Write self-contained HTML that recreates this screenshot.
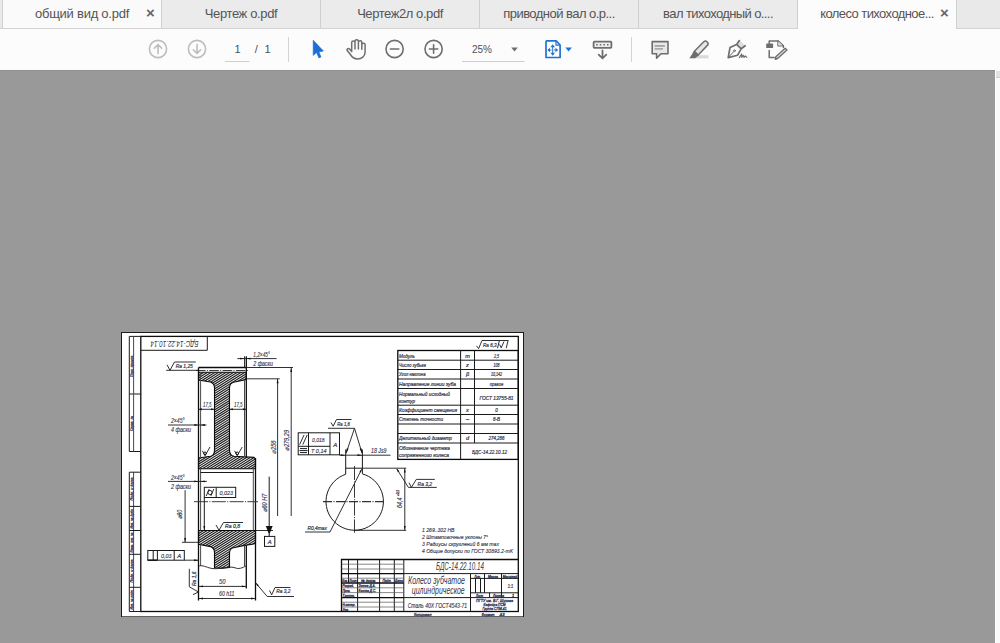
<!DOCTYPE html>
<html><head><meta charset="utf-8">
<style>
html,body{margin:0;padding:0;}
body{width:1000px;height:643px;overflow:hidden;background:#999;font-family:"Liberation Sans",sans-serif;position:relative;}
#tabs{position:absolute;left:0;top:0;width:1000px;height:29px;background:#e9e9e9;}
#tabs .line{position:absolute;left:0;top:28px;width:1000px;height:1px;background:#d2d2d2;}
.tab{position:absolute;top:0;height:28px;box-sizing:border-box;border-left:1px solid #d0d0d0;background:#ebebeb;color:#545454;font-size:13px;line-height:28px;text-align:center;white-space:nowrap;}
.tab.hi{background:#fafafa;}
.tab.act{background:#fcfcfc;height:29px;}
.tab .x{position:absolute;top:-1px;font-size:15px;font-weight:bold;color:#666;}
#tb{position:absolute;left:0;top:29px;width:1000px;height:41px;background:#fcfcfc;}
#tbline{position:absolute;left:0;top:70px;width:995px;height:1px;background:#8e8e8e;}
#sb{position:absolute;left:995px;top:70px;width:5px;height:573px;background:#f9f9f9;border-left:1px solid #fff;box-sizing:border-box;}
#sbb{position:absolute;left:996px;top:71px;width:4px;height:6px;background:#e2e2e2;border-bottom:1px solid #cfcfcf;}
#page{position:absolute;left:121px;top:332px;width:403px;height:285px;background:#fff;}
svg{position:absolute;left:0;top:0;}
</style></head>
<body>
<div id="tabs">
<div class="tab hi" style="left:2px;width:159px;"><span style="letter-spacing:-0.25px">общий вид о.pdf</span><span class="x" style="left:143px;">×</span></div>
<div class="tab" style="left:161px;width:159px;"><span style="letter-spacing:-0.37px">Чертеж о.pdf</span></div>
<div class="tab" style="left:320px;width:159px;"><span style="letter-spacing:-0.43px">Чертеж2л о.pdf</span></div>
<div class="tab" style="left:479px;width:159px;"><span style="letter-spacing:-0.53px">приводной вал о.р...</span></div>
<div class="tab" style="left:638px;width:159px;"><span style="letter-spacing:-0.6px">вал тихоходный о....</span></div>
<div class="tab act" style="left:797px;width:160px;border-right:1px solid #d0d0d0;"><span style="letter-spacing:-0.58px">колесо тихоходное...</span><span class="x" style="left:142px;">×</span></div>
<div class="line" style="width:797px;"></div>
<div class="line" style="left:957px;width:43px;"></div>
</div>
<div id="tb"></div>
<div id="tbline"></div>
<div id="sb"></div><div id="sbb"></div>
<div id="page"></div>
<!--TBS--><svg id="tbs" width="1000" height="41" viewBox="0 29 1000 41" style="top:29px">
<g fill="none" stroke="#bdbdbd" stroke-width="1.6" stroke-linecap="round" stroke-linejoin="round">
<circle cx="158" cy="49" r="8.6"/><path d="M158 53.5V44.6M154.3 48.2L158 44.5L161.7 48.2"/>
<circle cx="197" cy="49" r="8.6"/><path d="M197 44.5V53.4M193.3 49.8L197 53.5L200.7 49.8"/>
</g>
<g font-family="Liberation Sans, sans-serif" font-size="11" fill="#505050">
<text x="234.6" y="53">1</text><text x="254.8" y="53">/</text><text x="264.6" y="53">1</text>
<text x="472" y="53" textLength="20" lengthAdjust="spacingAndGlyphs">25%</text>
</g>
<rect x="225" y="61" width="24.5" height="1" fill="#cfcfcf"/>
<rect x="462" y="61" width="62.5" height="1" fill="#cfcfcf"/>
<rect x="288" y="37" width="1" height="25" fill="#d4d4d4"/>
<rect x="631" y="37" width="1" height="25" fill="#d4d4d4"/>
<path d="M313.2 40.2V55.4L316.5 52.6L318.9 57.9L321 57L318.9 51.9L323.4 51Z" fill="#1b6fd2" stroke="#1b6fd2" stroke-width="0.6" stroke-linejoin="round"/>
<g fill="none" stroke="#6e6e6e" stroke-width="1.5" stroke-linecap="round" stroke-linejoin="round">
<path d="M351.7 51.6V42.6a1.65 1.65 0 0 1 3.3 0V49M355 42V41.4a1.7 1.7 0 0 1 3.4 0V49M358.4 42.4a1.7 1.7 0 0 1 3.4 0V49.3M361.8 44.8a1.65 1.65 0 0 1 3.3 0V52C365.1 56.5 361.5 59 357.6 59C353.6 59 351.6 56.6 350 54L347.2 50.6C346.3 49.2 348.2 47.8 349.5 49L351.7 51.6"/>
</g>
<g fill="none" stroke="#6e6e6e" stroke-width="1.6" stroke-linecap="round">
<circle cx="394.6" cy="49" r="8.6"/><path d="M390.4 49H398.8"/>
<circle cx="433.6" cy="49" r="8.6"/><path d="M429.4 49H437.8M433.6 44.8V53.2"/>
</g>
<path d="M511.2 47.6H517.8L514.5 51.4Z" fill="#6e6e6e"/>
<g fill="none" stroke="#1f72d4" stroke-width="1.7" stroke-linejoin="round">
<path d="M546.6 40.9H556.2L560.1 45V57.5H546V41.5Z"/>
<path d="M556 41.2V45.2H560" stroke-width="1.2"/>
</g>
<g fill="#1f72d4"><path d="M552.7 44.3L555 47.2H550.4ZM552.7 55.7L555 52.8H550.4ZM547.3 50L550 47.8V52.2ZM558.2 50L555.5 47.8V52.2Z"/><rect x="552.2" y="46.5" width="1" height="7"/><rect x="549.5" y="49.5" width="2" height="1"/><rect x="554" y="49.5" width="2" height="1"/>
<path d="M565.3 47.6H571.9L568.6 51.6Z"/></g>
<g fill="none" stroke="#6e6e6e" stroke-width="1.6" stroke-linecap="round" stroke-linejoin="round">
<rect x="593.6" y="41.6" width="17.8" height="6.2" rx="0.8" fill="#ececec" stroke-width="1.8"/>
<path d="M602.5 50.4V58M598.7 54.6L602.5 58.3L606.3 54.6" stroke-width="1.8"/>
</g>
<g fill="#6e6e6e"><rect x="596.2" y="44" width="1.5" height="1.5"/><rect x="599.8" y="44" width="1.5" height="1.5"/><rect x="603.4" y="44" width="1.5" height="1.5"/><rect x="607" y="44" width="1.5" height="1.5"/></g>
<path d="M652.2 41.6H668V53.7H661L656.6 58.2V53.7H652.2Z" fill="#e8e8e8" stroke="#6e6e6e" stroke-width="1.6" stroke-linejoin="round"/>
<rect x="654.6" y="45.4" width="10.2" height="1.1" fill="#777"/><rect x="654.6" y="48" width="8.4" height="1.7" fill="#a9a9a9"/>
<rect x="694" y="55.2" width="14.5" height="3.2" fill="#d9d9d9"/>
<path d="M694.4 51.2L703.8 41.8a2.2 2.2 0 0 1 3.1 0l.5 .5a2.2 2.2 0 0 1 0 3.1L698.2 55Z" fill="#e6e6e6" stroke="#6e6e6e" stroke-width="1.5" stroke-linejoin="round"/>
<path d="M693.9 50.7L698.8 55.5L696.4 57.2L695 58.3H689.4L692 54.2Z" fill="#6e6e6e"/>
<path d="M736.8 44.4L739.5 40.6L745.3 45.6L741.2 48.8Z" fill="#dcdcdc"/>
<g fill="none" stroke="#6e6e6e" stroke-width="1.7" stroke-linecap="round" stroke-linejoin="round">
<path d="M728.2 57.6L730 47.6L736.6 44.4L741.2 48.8L737.6 55.2ZM736.6 44.4L739.4 40.6M741.2 48.8L745.2 45.8" />
<path d="M728.6 57.3L734 51.2" stroke-width="1"/><circle cx="734.5" cy="50.7" r="0.9" stroke-width="0.9"/>
<path d="M739.4 57.6L741.6 54L741.8 57.4L743.2 55.2L744 57.4L745.2 56L746.8 57.4" stroke-width="1.2"/>
</g>
<g fill="none" stroke="#6e6e6e" stroke-width="1.5" stroke-linejoin="round" stroke-linecap="round">
<path d="M769.2 43.4V40.9H778L783.4 45.8V47.4"/><path d="M769.2 50.4V57.6H774.2"/>
<path d="M778 41V45.8H783.2" stroke-width="1.4"/>
</g>
<path d="M778.4 41.6L782.6 45.4H778.4Z" fill="#e4e4e4"/>
<rect x="766.2" y="43.5" width="6.9" height="4.6" rx="0.6" fill="#6e6e6e"/>
<path d="M785.2 48.2L787 49.9L777.6 58.6L775.2 59.4L775.8 56.8Z" fill="#ddd" stroke="#6e6e6e" stroke-width="1.3" stroke-linejoin="round"/>
<path d="M775.3 59.3L775.9 56.9L777.5 58.5Z" fill="#6e6e6e"/>
</svg>
<!--TBE-->
<!--DWS--><svg id="dw" width="1000" height="643" font-family="Liberation Sans, sans-serif" font-style="italic">
<defs><pattern id="h" width="1.435" height="8" patternUnits="userSpaceOnUse" patternTransform="rotate(45)"><rect width="1.435" height="8" fill="#fff"/><rect x="0.4" y="0" width="0.6" height="8" fill="#151515"/></pattern></defs>
<rect x="121.5" y="332.5" width="402" height="284" fill="#fff" stroke="#1c1c1c" stroke-width="1"/>
<path d="M122 616.5H523" stroke="#606060" stroke-width="1" fill="none"/>
<rect x="140.8" y="336.4" width="377.5" height="275.1" stroke="#0c0c0c" stroke-width="1.3" fill="none"/>
<path d="M140.8 336.4H129.3V451.5H140.8M129.3 394H140.8" stroke="#1a1a1a" stroke-width="1" fill="none"/>
<path d="M133.6 336.4L133.6 451.5" stroke="#4a4a4a" stroke-width="1" fill="none"/>
<path d="M133.6 472.2L133.6 611.5" stroke="#4a4a4a" stroke-width="1" fill="none"/>
<path d="M140.8 472.2H129.3V611.5H140.8M129.3 506.4H140.8M129.3 530.5H140.8M129.3 554.3H140.8M129.3 587.3H140.8" stroke="#1a1a1a" stroke-width="1" fill="none"/>
<text x="132.6" y="377.0" font-size="3.2" text-anchor="start" fill="#3a4068" stroke="#3a4068" stroke-width="0.30" textLength="22" lengthAdjust="spacingAndGlyphs" transform="rotate(-90 132.6 377.0)">Перв. примен.</text>
<text x="132.6" y="431.0" font-size="3.2" text-anchor="start" fill="#3a4068" stroke="#3a4068" stroke-width="0.30" textLength="15" lengthAdjust="spacingAndGlyphs" transform="rotate(-90 132.6 431.0)">Справ. №</text>
<text x="132.6" y="500.5" font-size="3.2" text-anchor="start" fill="#3a4068" stroke="#3a4068" stroke-width="0.30" textLength="23" lengthAdjust="spacingAndGlyphs" transform="rotate(-90 132.6 500.5)">Подп. и дата</text>
<text x="132.6" y="528.5" font-size="3.2" text-anchor="start" fill="#3a4068" stroke="#3a4068" stroke-width="0.30" textLength="20" lengthAdjust="spacingAndGlyphs" transform="rotate(-90 132.6 528.5)">Инв. № дубл.</text>
<text x="132.6" y="552.5" font-size="3.2" text-anchor="start" fill="#3a4068" stroke="#3a4068" stroke-width="0.30" textLength="20" lengthAdjust="spacingAndGlyphs" transform="rotate(-90 132.6 552.5)">Взам. инв. №</text>
<text x="132.6" y="582.5" font-size="3.2" text-anchor="start" fill="#3a4068" stroke="#3a4068" stroke-width="0.30" textLength="23" lengthAdjust="spacingAndGlyphs" transform="rotate(-90 132.6 582.5)">Подп. и дата</text>
<text x="132.6" y="609.5" font-size="3.2" text-anchor="start" fill="#3a4068" stroke="#3a4068" stroke-width="0.30" textLength="20" lengthAdjust="spacingAndGlyphs" transform="rotate(-90 132.6 609.5)">Инв. № подл.</text>
<path d="M207.3 336.4V350.3H140.8" stroke="#1a1a1a" stroke-width="1" fill="none"/>
<text x="174.5" y="343.8" font-size="8.6" text-anchor="middle" fill="#33374c" stroke="#33374c" stroke-width="0.00" textLength="48" lengthAdjust="spacingAndGlyphs" transform="rotate(180 174.5 343.8)" dominant-baseline="central">БДС-14.22.10.14</text>
<clipPath id="c1"><path d="M198.5 372.2H246.3V379.5L233.5 382.3C231 383 229.5 385 229.5 388V450C229.5 453.5 231 455.8 234 456.3L254 457.4L255.5 459V468.7H198.5V458L210.5 456.3C213 455.8 214.5 453.5 214.5 450V388C214.5 385 213 383 210.5 382L198.5 380Z"/></clipPath>
<path d="M196 370.19L258 331.44M196 372.52L258 333.77M196 374.85L258 336.10M196 377.18L258 338.43M196 379.51L258 340.76M196 381.84L258 343.09M196 384.18L258 345.43M196 386.51L258 347.76M196 388.84L258 350.09M196 391.17L258 352.42M196 393.50L258 354.75M196 395.83L258 357.08M196 398.16L258 359.41M196 400.49L258 361.74M196 402.83L258 364.08M196 405.16L258 366.41M196 407.49L258 368.74M196 409.82L258 371.07M196 412.15L258 373.40M196 414.48L258 375.73M196 416.81L258 378.06M196 419.14L258 380.39M196 421.48L258 382.73M196 423.81L258 385.06M196 426.14L258 387.39M196 428.47L258 389.72M196 430.80L258 392.05M196 433.13L258 394.38M196 435.46L258 396.71M196 437.79L258 399.04M196 440.13L258 401.38M196 442.46L258 403.71M196 444.79L258 406.04M196 447.12L258 408.37M196 449.45L258 410.70M196 451.78L258 413.03M196 454.11L258 415.36M196 456.44L258 417.69M196 458.78L258 420.03M196 461.11L258 422.36M196 463.44L258 424.69M196 465.77L258 427.02M196 468.10L258 429.35M196 470.43L258 431.68M196 472.76L258 434.01M196 475.09L258 436.34M196 477.43L258 438.68M196 479.76L258 441.01M196 482.09L258 443.34M196 484.42L258 445.67M196 486.75L258 448.00M196 489.08L258 450.33M196 491.41L258 452.66M196 493.74L258 454.99M196 496.08L258 457.33M196 498.41L258 459.66M196 500.74L258 461.99M196 503.07L258 464.32M196 505.40L258 466.65M196 507.73L258 468.98" clip-path="url(#c1)" stroke="#222" stroke-width="1.2" fill="none"/>
<path d="M198.5 372.2H246.3V379.5L233.5 382.3C231 383 229.5 385 229.5 388V450C229.5 453.5 231 455.8 234 456.3L254 457.4L255.5 459V468.7H198.5V458L210.5 456.3C213 455.8 214.5 453.5 214.5 450V388C214.5 385 213 383 210.5 382L198.5 380Z" fill="none" stroke="#0c0c0c" stroke-width="1.1"/>
<clipPath id="c2"><path d="M198.5 530.5H255.5V542L253.8 544L244.5 545.4L233.5 547.8C231 548.4 229.5 550 229.5 553V567.5L222 568.2L214.5 567.8V553C214.5 550 213 547.6 210.5 546.6L198.5 544.3Z"/></clipPath>
<path d="M196 528.19L258 489.44M196 530.52L258 491.77M196 532.85L258 494.10M196 535.18L258 496.43M196 537.51L258 498.76M196 539.84L258 501.09M196 542.18L258 503.43M196 544.51L258 505.76M196 546.84L258 508.09M196 549.17L258 510.42M196 551.50L258 512.75M196 553.83L258 515.08M196 556.16L258 517.41M196 558.49L258 519.74M196 560.83L258 522.08M196 563.16L258 524.41M196 565.49L258 526.74M196 567.82L258 529.07M196 570.15L258 531.40M196 572.48L258 533.73M196 574.81L258 536.06M196 577.14L258 538.39M196 579.48L258 540.73M196 581.81L258 543.06M196 584.14L258 545.39M196 586.47L258 547.72M196 588.80L258 550.05M196 591.13L258 552.38M196 593.46L258 554.71M196 595.79L258 557.04M196 598.13L258 559.38M196 600.46L258 561.71M196 602.79L258 564.04M196 605.12L258 566.37M196 607.45L258 568.70" clip-path="url(#c2)" stroke="#222" stroke-width="1.2" fill="none"/>
<path d="M198.5 530.5H255.5V542L253.8 544L244.5 545.4L233.5 547.8C231 548.4 229.5 550 229.5 553V567.5L222 568.2L214.5 567.8V553C214.5 550 213 547.6 210.5 546.6L198.5 544.3Z" fill="none" stroke="#0c0c0c" stroke-width="1.1"/>
<path d="M198.5 367.5L246.3 367.5" stroke="#0c0c0c" stroke-width="1.3" fill="none"/>
<path d="M196 370.45H248" stroke="#3a3a3a" stroke-width="1.1" stroke-dasharray="9.5 1.4 1 1.4" fill="none"/>
<path d="M198.5 367.5L198.5 600.5" stroke="#0c0c0c" stroke-width="1.3" fill="none"/>
<path d="M200.6 372.2L200.6 458" stroke="#4a4a4a" stroke-width="1" fill="none"/>
<path d="M246.3 356.3L246.3 458" stroke="#0c0c0c" stroke-width="1.3" fill="none"/>
<path d="M244.5 356.3L244.5 367.5" stroke="#1e1e1e" stroke-width="0.92" fill="none"/>
<path d="M244.5 380L244.5 457" stroke="#4a4a4a" stroke-width="1" fill="none"/>
<path d="M255.5 458L255.5 600.5" stroke="#0c0c0c" stroke-width="1.3" fill="none"/>
<path d="M200.6 468.7L200.6 530.5" stroke="#4a4a4a" stroke-width="1" fill="none"/>
<path d="M253.3 468.7L253.3 530.5" stroke="#4a4a4a" stroke-width="1" fill="none"/>
<path d="M200.6 472.5L253.3 472.5" stroke="#1a1a1a" stroke-width="1" fill="none"/>
<path d="M200.6 544.5L200.6 566" stroke="#4a4a4a" stroke-width="1" fill="none"/>
<path d="M244.5 545.5L244.5 566" stroke="#4a4a4a" stroke-width="1" fill="none"/>
<path d="M246.3 545.2L246.3 588.5" stroke="#0c0c0c" stroke-width="1.3" fill="none"/>
<path d="M198.5 566.3C201 564.8 205 566.5 209 567.8S217 568.8 222 568.2S231 566.2 235 567.8S242 568 246.3 565.8" stroke="#1e1e1e" stroke-width="0.92" fill="none"/>
<path d="M194 501.7H258" stroke="#333" stroke-width="0.95" stroke-dasharray="14 1.4 1 1.4" fill="none"/>
<path d="M237.4 358.6L276.6 358.6" stroke="#1e1e1e" stroke-width="0.92" fill="none"/>
<path d="M244.40 358.60L240.20 357.65L240.20 359.55Z" fill="#111"/>
<path d="M246.30 358.60L250.50 359.55L250.50 357.65Z" fill="#111"/>
<text x="253.3" y="356.8" font-size="6.6" text-anchor="start" fill="#33374c" stroke="#33374c" stroke-width="0.14" textLength="16.5" lengthAdjust="spacingAndGlyphs">1,2×45°</text>
<text x="253.3" y="365.6" font-size="6.3" text-anchor="start" fill="#33374c" stroke="#33374c" stroke-width="0.14" textLength="19.5" lengthAdjust="spacingAndGlyphs">2 фаски</text>
<path d="M246.3 367.5L293 367.5" stroke="#1e1e1e" stroke-width="0.92" fill="none"/>
<path d="M291.2 367.5L291.2 516" stroke="#1e1e1e" stroke-width="0.92" fill="none"/>
<path d="M291.20 367.80L290.25 372.00L292.15 372.00Z" fill="#111"/>
<path d="M246.3 378.8L279.7 378.8" stroke="#1e1e1e" stroke-width="0.92" fill="none"/>
<path d="M277.6 378.8L277.6 516" stroke="#1e1e1e" stroke-width="0.92" fill="none"/>
<path d="M277.60 379.00L276.65 383.20L278.55 383.20Z" fill="#111"/>
<text x="275.6" y="453.5" font-size="6.6" text-anchor="start" fill="#33374c" stroke="#33374c" stroke-width="0.14" textLength="13" lengthAdjust="spacingAndGlyphs" transform="rotate(-90 275.6 453.5)">⌀256</text>
<text x="288.6" y="450.5" font-size="6.6" text-anchor="start" fill="#33374c" stroke="#33374c" stroke-width="0.14" textLength="20.5" lengthAdjust="spacingAndGlyphs" transform="rotate(-90 288.6 450.5)">⌀279,29</text>
<path d="M198.5 409.3L214.5 409.3" stroke="#1e1e1e" stroke-width="0.92" fill="none"/>
<path d="M229.5 409.3L246.3 409.3" stroke="#1e1e1e" stroke-width="0.92" fill="none"/>
<path d="M198.70 409.30L201.90 410.25L201.90 408.35Z" fill="#111"/>
<path d="M214.30 409.30L211.10 408.35L211.10 410.25Z" fill="#111"/>
<path d="M229.70 409.30L232.90 410.25L232.90 408.35Z" fill="#111"/>
<path d="M246.10 409.30L242.90 408.35L242.90 410.25Z" fill="#111"/>
<text x="203" y="407" font-size="6.6" text-anchor="start" fill="#33374c" stroke="#33374c" stroke-width="0.14" textLength="8.5" lengthAdjust="spacingAndGlyphs">17,5</text>
<text x="234" y="407" font-size="6.6" text-anchor="start" fill="#33374c" stroke="#33374c" stroke-width="0.14" textLength="8.5" lengthAdjust="spacingAndGlyphs">17,5</text>
<path d="M168 425L206.5 425" stroke="#1e1e1e" stroke-width="0.92" fill="none"/>
<path d="M198.50 425.00L194.30 424.05L194.30 425.95Z" fill="#111"/>
<path d="M200.60 425.00L204.80 425.95L204.80 424.05Z" fill="#111"/>
<text x="171" y="423" font-size="6.6" text-anchor="start" fill="#33374c" stroke="#33374c" stroke-width="0.14" textLength="13.5" lengthAdjust="spacingAndGlyphs">2×45°</text>
<text x="171" y="432.3" font-size="6.3" text-anchor="start" fill="#33374c" stroke="#33374c" stroke-width="0.14" textLength="20" lengthAdjust="spacingAndGlyphs">4 фаски</text>
<path d="M168 481.4L206.9 481.4" stroke="#1e1e1e" stroke-width="0.92" fill="none"/>
<path d="M198.50 481.40L194.30 480.45L194.30 482.35Z" fill="#111"/>
<path d="M200.60 481.40L204.80 482.35L204.80 480.45Z" fill="#111"/>
<text x="171" y="479.5" font-size="6.6" text-anchor="start" fill="#33374c" stroke="#33374c" stroke-width="0.14" textLength="13.5" lengthAdjust="spacingAndGlyphs">2×45°</text>
<text x="171" y="488.7" font-size="6.3" text-anchor="start" fill="#33374c" stroke="#33374c" stroke-width="0.14" textLength="20" lengthAdjust="spacingAndGlyphs">2 фаски</text>
<path d="M185.1 490.2L185.1 542.3" stroke="#1e1e1e" stroke-width="0.92" fill="none"/>
<path d="M182 542.3L198.5 542.3" stroke="#1e1e1e" stroke-width="0.92" fill="none"/>
<path d="M185.10 542.20L186.05 538.00L184.15 538.00Z" fill="#111"/>
<text x="182.2" y="519.2" font-size="6.6" text-anchor="start" fill="#33374c" stroke="#33374c" stroke-width="0.14" textLength="9.5" lengthAdjust="spacingAndGlyphs" transform="rotate(-90 182.2 519.2)">⌀80</text>
<path d="M202.4 450.8L205 455.8L210 447" stroke="#1e1e1e" stroke-width="0.92" fill="none"/>
<circle cx="205" cy="453.3" r="1.3" stroke="#111" stroke-width="1" fill="none"/>
<path d="M234.6 450.8L237.2 455.8L242.2 447" stroke="#1e1e1e" stroke-width="0.92" fill="none"/>
<circle cx="237.2" cy="453.3" r="1.3" stroke="#111" stroke-width="1" fill="none"/>
<path d="M167 364.8L170 370.3L174.5 362H195.8" stroke="#1e1e1e" stroke-width="0.92" fill="none"/>
<path d="M166.2 370.3L198.5 370.3" stroke="#1e1e1e" stroke-width="0.92" fill="none"/>
<text x="175.8" y="368.3" font-size="5.6" text-anchor="start" fill="#33374c" stroke="#33374c" stroke-width="0.22" textLength="17" lengthAdjust="spacingAndGlyphs">Ra 1,25</text>
<rect x="204.3" y="487.3" width="31.4" height="10.2" stroke="#1a1a1a" stroke-width="1" fill="none"/>
<path d="M216.2 487.3L216.2 497.5" stroke="#1a1a1a" stroke-width="1" fill="none"/>
<circle cx="210" cy="492.5" r="2.1" stroke="#1e1e1e" stroke-width="0.92" fill="none"/>
<path d="M206.2 496L209.2 489M210.8 496L213.8 489" stroke="#1e1e1e" stroke-width="0.92" fill="none"/>
<text x="219.5" y="495" font-size="6.2" text-anchor="start" fill="#33374c" stroke="#33374c" stroke-width="0.14" textLength="13.5" lengthAdjust="spacingAndGlyphs">0,023</text>
<path d="M204.3 497.5L204.3 530.2" stroke="#1a1a1a" stroke-width="1" fill="none"/>
<path d="M204.30 530.30L205.25 526.10L203.35 526.10Z" fill="#111"/>
<path d="M216 525L219 530.3L223.5 522.5H243" stroke="#1e1e1e" stroke-width="0.92" fill="none"/>
<text x="225" y="528.3" font-size="5.6" text-anchor="start" fill="#33374c" stroke="#33374c" stroke-width="0.22" textLength="15" lengthAdjust="spacingAndGlyphs">Ra 0,8</text>
<path d="M255.5 530.5L273 530.5" stroke="#1e1e1e" stroke-width="0.92" fill="none"/>
<path d="M269.2 476.6L269.2 527" stroke="#1a1a1a" stroke-width="1" fill="none"/>
<path d="M265.8 526H272.6L269.2 535Z" fill="#111"/>
<path d="M269.2 534L269.2 536.4" stroke="#1a1a1a" stroke-width="1" fill="none"/>
<rect x="264.5" y="536.4" width="10.3" height="10" stroke="#1a1a1a" stroke-width="1" fill="none"/>
<text x="269.6" y="543.8" font-size="5.8" text-anchor="middle" fill="#33374c" stroke="#33374c" stroke-width="0.22">A</text>
<text x="267.2" y="512" font-size="6.4" text-anchor="start" fill="#33374c" stroke="#33374c" stroke-width="0.14" textLength="18.5" lengthAdjust="spacingAndGlyphs" transform="rotate(-90 267.2 512)">⌀60 H7</text>
<rect x="147.8" y="550.5" width="36.5" height="9.7" stroke="#1a1a1a" stroke-width="1" fill="none"/>
<path d="M153.2 550.5V560.2M157.4 550.5V560.2M174.2 550.5V560.2" stroke="#1a1a1a" stroke-width="1" fill="none"/>
<path d="M147.8 560.2L157.4 560.2" stroke="#111" stroke-width="1.4"/>
<text x="161" y="558" font-size="6.2" text-anchor="start" fill="#33374c" stroke="#33374c" stroke-width="0.14" textLength="10.5" lengthAdjust="spacingAndGlyphs">0,03</text>
<text x="179.2" y="558" font-size="5.8" text-anchor="middle" fill="#33374c" stroke="#33374c" stroke-width="0.22">A</text>
<path d="M184.3 560.2L198.5 560.2" stroke="#1e1e1e" stroke-width="0.92" fill="none"/>
<path d="M198.40 560.20L194.20 559.25L194.20 561.15Z" fill="#111"/>
<path d="M198.5 586.4L246.3 586.4" stroke="#1e1e1e" stroke-width="0.92" fill="none"/>
<path d="M198.70 586.40L202.90 587.35L202.90 585.45Z" fill="#111"/>
<path d="M246.10 586.40L241.90 585.45L241.90 587.35Z" fill="#111"/>
<text x="219" y="584.2" font-size="6.8" text-anchor="start" fill="#33374c" stroke="#33374c" stroke-width="0.14" textLength="6.5" lengthAdjust="spacingAndGlyphs">50</text>
<path d="M198.5 598.5L255.5 598.5" stroke="#1e1e1e" stroke-width="0.92" fill="none"/>
<path d="M198.70 598.50L202.90 599.45L202.90 597.55Z" fill="#111"/>
<path d="M255.30 598.50L251.10 597.55L251.10 599.45Z" fill="#111"/>
<text x="219" y="596.3" font-size="6.6" text-anchor="start" fill="#33374c" stroke="#33374c" stroke-width="0.14" textLength="15.5" lengthAdjust="spacingAndGlyphs">60 h11</text>
<path d="M189.3 568.8V586.8L198.5 592L193 594.6" stroke="#1e1e1e" stroke-width="0.92" fill="none"/>
<text x="195.6" y="586" font-size="5.6" text-anchor="start" fill="#33374c" stroke="#33374c" stroke-width="0.22" textLength="14.5" lengthAdjust="spacingAndGlyphs" transform="rotate(-90 195.6 586)">Ra 1,6</text>
<path d="M255.8 583L267.2 596.5H294" stroke="#1e1e1e" stroke-width="0.92" fill="none"/>
<path d="M255.70 582.80L257.45 586.29L258.83 585.13Z" fill="#111"/>
<path d="M269.5 590.5L271.7 594.8L275 587.5H290.5" stroke="#1e1e1e" stroke-width="0.92" fill="none"/>
<text x="276.3" y="593.4" font-size="5.6" text-anchor="start" fill="#33374c" stroke="#33374c" stroke-width="0.22" textLength="14" lengthAdjust="spacingAndGlyphs">Ra 3,2</text>
<rect x="298.2" y="432.8" width="41.3" height="22" stroke="#1a1a1a" stroke-width="1" fill="none"/>
<path d="M308.5 432.8V454.8M330 432.8V454.8M298.2 446.3H330" stroke="#1a1a1a" stroke-width="1" fill="none"/>
<path d="M299.6 444.6L304 435M302.8 444.6L307.2 435" stroke="#1e1e1e" stroke-width="0.92" fill="none"/>
<path d="M300 448.6H307M299.4 450.6H307.6M300 452.6H307" stroke="#1a1a1a" stroke-width="1" fill="none"/>
<text x="312" y="442" font-size="6.2" text-anchor="start" fill="#33374c" stroke="#33374c" stroke-width="0.14" textLength="12.5" lengthAdjust="spacingAndGlyphs">0,018</text>
<text x="311" y="453" font-size="6.2" text-anchor="start" fill="#33374c" stroke="#33374c" stroke-width="0.14" textLength="15.5" lengthAdjust="spacingAndGlyphs">T 0,14</text>
<text x="333.2" y="446.6" font-size="6" text-anchor="start" fill="#33374c" stroke="#33374c" stroke-width="0.22">A</text>
<path d="M339.5 455.2L390.5 455.2" stroke="#1e1e1e" stroke-width="0.92" fill="none"/>
<path d="M345.70 455.20L340.70 454.30L340.70 456.10Z" fill="#111"/>
<path d="M362.40 455.20L357.40 454.30L357.40 456.10Z" fill="#111"/>
<text x="371" y="453" font-size="6.4" text-anchor="start" fill="#33374c" stroke="#33374c" stroke-width="0.14" textLength="15.5" lengthAdjust="spacingAndGlyphs">18 Js9</text>
<path d="M331 422.5L333.2 426.2L336.5 419.5H351.5" stroke="#1e1e1e" stroke-width="0.92" fill="none"/>
<path d="M328 428.3L354.5 428.3" stroke="#1e1e1e" stroke-width="0.92" fill="none"/>
<text x="337.3" y="425.8" font-size="5.6" text-anchor="start" fill="#33374c" stroke="#33374c" stroke-width="0.22" textLength="12.5" lengthAdjust="spacingAndGlyphs">Ra 1,6</text>
<path d="M354.5 428.3L346.2 453M354.5 428.3L362 453" stroke="#1e1e1e" stroke-width="0.92" fill="none"/>
<path d="M345.90 453.80L348.58 448.79L346.78 448.19Z" fill="#111"/>
<path d="M362.20 453.80L361.52 448.16L359.70 448.70Z" fill="#111"/>
<path d="M345.7 449.5L345.7 474.2" stroke="#1a1a1a" stroke-width="1" fill="none"/>
<path d="M362.4 449.5L362.4 473.8" stroke="#1a1a1a" stroke-width="1" fill="none"/>
<path d="M345.7 468.2L362.4 468.2" stroke="#1a1a1a" stroke-width="1" fill="none"/>
<path d="M362.4 468.2L406.2 468.2" stroke="#1e1e1e" stroke-width="0.92" fill="none"/>
<path d="M345.7 474.3A28.7 28.7 0 1 0 362.4 473.9" stroke="#1a1a1a" stroke-width="1" fill="none"/>
<path d="M354.5 466V532.6" stroke="#222" stroke-width="0.9" stroke-dasharray="14 1.4 1 1.4" fill="none"/>
<path d="M323 501.6H385.2" stroke="#333" stroke-width="1.1" stroke-dasharray="9 1.5 1 1.5" fill="none"/>
<path d="M361.6 469.4L330 532H305" stroke="#1e1e1e" stroke-width="0.92" fill="none"/>
<path d="M361.90 468.80L359.44 471.82L360.97 472.58Z" fill="#111"/>
<text x="307.5" y="530" font-size="5.8" text-anchor="start" fill="#33374c" stroke="#33374c" stroke-width="0.22" textLength="19.5" lengthAdjust="spacingAndGlyphs">R0,4max</text>
<path d="M354.5 530.3L406.2 530.3" stroke="#1e1e1e" stroke-width="0.92" fill="none"/>
<path d="M404.8 468.2L404.8 530.3" stroke="#1e1e1e" stroke-width="0.92" fill="none"/>
<path d="M404.80 468.40L403.85 472.60L405.75 472.60Z" fill="#111"/>
<path d="M404.80 530.10L405.75 525.90L403.85 525.90Z" fill="#111"/>
<text x="401.6" y="508" font-size="6.4" text-anchor="start" fill="#33374c" stroke="#33374c" stroke-width="0.14" textLength="10.5" lengthAdjust="spacingAndGlyphs" transform="rotate(-90 401.6 508)">64,4</text>
<text x="398.8" y="496" font-size="3.6" text-anchor="start" fill="#33374c" stroke="#33374c" stroke-width="0.30" textLength="6" lengthAdjust="spacingAndGlyphs" transform="rotate(-90 398.8 496)">+0,1</text>
<path d="M396.8 468.9L408.4 487.4H436.8" stroke="#1e1e1e" stroke-width="0.92" fill="none"/>
<path d="M396.60 468.60L397.85 472.30L399.38 471.35Z" fill="#111"/>
<path d="M409 482.7L411.4 487.4L416.3 479.4H434.8" stroke="#1e1e1e" stroke-width="0.92" fill="none"/>
<text x="417.6" y="485.6" font-size="5.6" text-anchor="start" fill="#33374c" stroke="#33374c" stroke-width="0.22" textLength="14.5" lengthAdjust="spacingAndGlyphs">Ra 3,2</text>
<path d="M476.5 345.8L478.6 348.6L482 340.5H508.5" stroke="#1e1e1e" stroke-width="0.92" fill="none"/>
<text x="483" y="347.3" font-size="5.6" text-anchor="start" fill="#33374c" stroke="#33374c" stroke-width="0.22" textLength="13.5" lengthAdjust="spacingAndGlyphs">Ra 6,3</text>
<path d="M499.6 344.5L501.2 347.8L504 341.5" stroke="#1e1e1e" stroke-width="0.92" fill="none"/>
<path d="M497.5 348.2L499.4 340.6M508 340.8L506.2 348.2" stroke="#1e1e1e" stroke-width="0.92" fill="none"/>
<rect x="397.8" y="350.5" width="120.5" height="108.9" stroke="#0c0c0c" stroke-width="1.3" fill="none"/>
<path d="M397.8 360.2L518.3 360.2" stroke="#1a1a1a" stroke-width="1" fill="none"/>
<path d="M397.8 369.5L518.3 369.5" stroke="#1a1a1a" stroke-width="1" fill="none"/>
<path d="M397.8 379L518.3 379" stroke="#1a1a1a" stroke-width="1" fill="none"/>
<path d="M397.8 388.5L518.3 388.5" stroke="#1a1a1a" stroke-width="1" fill="none"/>
<path d="M397.8 405.2L518.3 405.2" stroke="#1a1a1a" stroke-width="1" fill="none"/>
<path d="M397.8 414.5L518.3 414.5" stroke="#1a1a1a" stroke-width="1" fill="none"/>
<path d="M397.8 424L518.3 424" stroke="#1a1a1a" stroke-width="1" fill="none"/>
<path d="M397.8 433.5L518.3 433.5" stroke="#1a1a1a" stroke-width="1" fill="none"/>
<path d="M397.8 443L518.3 443" stroke="#1a1a1a" stroke-width="1" fill="none"/>
<path d="M460.6 350.5L460.6 459.4" stroke="#1a1a1a" stroke-width="1" fill="none"/>
<path d="M474.5 350.5L474.5 443" stroke="#1a1a1a" stroke-width="1" fill="none"/>
<text x="399" y="357.59999999999997" font-size="5.6" text-anchor="start" fill="#33374c" stroke="#33374c" stroke-width="0.22" textLength="16" lengthAdjust="spacingAndGlyphs">Модуль</text>
<text x="467.5" y="357.59999999999997" font-size="5.6" text-anchor="middle" fill="#33374c" stroke="#33374c" stroke-width="0.22">m</text>
<text x="496.5" y="357.59999999999997" font-size="5.6" text-anchor="middle" fill="#33374c" stroke="#33374c" stroke-width="0.22" textLength="5" lengthAdjust="spacingAndGlyphs">2,5</text>
<text x="399" y="366.9" font-size="5.6" text-anchor="start" fill="#33374c" stroke="#33374c" stroke-width="0.22" textLength="27" lengthAdjust="spacingAndGlyphs">Число зубьев</text>
<text x="467.5" y="366.9" font-size="5.6" text-anchor="middle" fill="#33374c" stroke="#33374c" stroke-width="0.22">z</text>
<text x="496.5" y="366.9" font-size="5.6" text-anchor="middle" fill="#33374c" stroke="#33374c" stroke-width="0.22" textLength="6" lengthAdjust="spacingAndGlyphs">108</text>
<text x="399" y="376.4" font-size="5.6" text-anchor="start" fill="#33374c" stroke="#33374c" stroke-width="0.22" textLength="26.5" lengthAdjust="spacingAndGlyphs">Угол наклона</text>
<text x="467.5" y="376.4" font-size="5.6" text-anchor="middle" fill="#33374c" stroke="#33374c" stroke-width="0.22">β</text>
<text x="496.5" y="376.4" font-size="5.6" text-anchor="middle" fill="#33374c" stroke="#33374c" stroke-width="0.22" textLength="11" lengthAdjust="spacingAndGlyphs">10,142</text>
<text x="399" y="385.9" font-size="5.6" text-anchor="start" fill="#33374c" stroke="#33374c" stroke-width="0.22" textLength="57" lengthAdjust="spacingAndGlyphs">Направление линии зуба</text>
<text x="496.5" y="385.9" font-size="5.6" text-anchor="middle" fill="#33374c" stroke="#33374c" stroke-width="0.22" textLength="13.5" lengthAdjust="spacingAndGlyphs">правое</text>
<text x="399" y="411.9" font-size="5.6" text-anchor="start" fill="#33374c" stroke="#33374c" stroke-width="0.22" textLength="58" lengthAdjust="spacingAndGlyphs">Коэффициент смещения</text>
<text x="467.5" y="411.9" font-size="5.6" text-anchor="middle" fill="#33374c" stroke="#33374c" stroke-width="0.22">x</text>
<text x="496.5" y="411.9" font-size="5.6" text-anchor="middle" fill="#33374c" stroke="#33374c" stroke-width="0.22" textLength="2.5" lengthAdjust="spacingAndGlyphs">0</text>
<text x="399" y="421.4" font-size="5.6" text-anchor="start" fill="#33374c" stroke="#33374c" stroke-width="0.22" textLength="44" lengthAdjust="spacingAndGlyphs">Степень точности</text>
<text x="467.5" y="421.4" font-size="5.6" text-anchor="middle" fill="#33374c" stroke="#33374c" stroke-width="0.22">–</text>
<text x="496.5" y="421.4" font-size="5.6" text-anchor="middle" fill="#33374c" stroke="#33374c" stroke-width="0.22" textLength="7" lengthAdjust="spacingAndGlyphs">8-В</text>
<text x="399" y="440.4" font-size="5.6" text-anchor="start" fill="#33374c" stroke="#33374c" stroke-width="0.22" textLength="53" lengthAdjust="spacingAndGlyphs">Делительный диаметр</text>
<text x="467.5" y="440.4" font-size="5.6" text-anchor="middle" fill="#33374c" stroke="#33374c" stroke-width="0.22">d</text>
<text x="496.5" y="440.4" font-size="5.6" text-anchor="middle" fill="#33374c" stroke="#33374c" stroke-width="0.22" textLength="16" lengthAdjust="spacingAndGlyphs">274,286</text>
<text x="399" y="396.3" font-size="5.6" text-anchor="start" fill="#33374c" stroke="#33374c" stroke-width="0.22" textLength="51" lengthAdjust="spacingAndGlyphs">Нормальный исходный</text>
<text x="399" y="402.6" font-size="5.6" text-anchor="start" fill="#33374c" stroke="#33374c" stroke-width="0.22" textLength="16" lengthAdjust="spacingAndGlyphs">контур</text>
<text x="496.5" y="399.8" font-size="5.6" text-anchor="middle" fill="#33374c" stroke="#33374c" stroke-width="0.22" textLength="34" lengthAdjust="spacingAndGlyphs">ГОСТ 13755-81</text>
<text x="399" y="449.6" font-size="5.6" text-anchor="start" fill="#33374c" stroke="#33374c" stroke-width="0.22" textLength="51" lengthAdjust="spacingAndGlyphs">Обозначение чертежа</text>
<text x="399" y="456.8" font-size="5.6" text-anchor="start" fill="#33374c" stroke="#33374c" stroke-width="0.22" textLength="50" lengthAdjust="spacingAndGlyphs">сопряженного колеса</text>
<text x="489.5" y="453.6" font-size="5.8" text-anchor="middle" fill="#33374c" stroke="#33374c" stroke-width="0.22" textLength="35" lengthAdjust="spacingAndGlyphs">БДС-14.22.10.12</text>
<text x="422" y="532.4" font-size="6.2" text-anchor="start" fill="#33374c" stroke="#33374c" stroke-width="0.14" textLength="32.5" lengthAdjust="spacingAndGlyphs">1 269..302 НВ</text>
<text x="422" y="539.2" font-size="6.2" text-anchor="start" fill="#33374c" stroke="#33374c" stroke-width="0.14" textLength="66" lengthAdjust="spacingAndGlyphs">2 Штамповочные уклоны 7°</text>
<text x="422" y="546.1" font-size="6.2" text-anchor="start" fill="#33374c" stroke="#33374c" stroke-width="0.14" textLength="77" lengthAdjust="spacingAndGlyphs">3 Радиусы скруглений 6 мм max</text>
<text x="422" y="553" font-size="6.2" text-anchor="start" fill="#33374c" stroke="#33374c" stroke-width="0.14" textLength="91" lengthAdjust="spacingAndGlyphs">4 Общие допуски по ГОСТ 30893.2-mK</text>
<path d="M518.3 559.5H341.5V611.5" stroke="#0c0c0c" stroke-width="1.3" fill="none"/>
<path d="M348.5 559.5V583M357.6 559.5V611.5M379.6 559.5V611.5M394.3 559.5V611.5M403.8 559.5V611.5" stroke="#1a1a1a" stroke-width="1" fill="none"/>
<path d="M341.5 573.6L403.8 573.6" stroke="#0c0c0c" stroke-width="1.3" fill="none"/>
<path d="M341.5 583L403.8 583" stroke="#0c0c0c" stroke-width="1.3" fill="none"/>
<path d="M341.5 597.6L403.8 597.6" stroke="#0c0c0c" stroke-width="1.3" fill="none"/>
<path d="M341.5 564.2L403.8 564.2" stroke="#555" stroke-width="0.7" fill="none"/>
<path d="M341.5 569L403.8 569" stroke="#555" stroke-width="0.7" fill="none"/>
<path d="M341.5 578.2L403.8 578.2" stroke="#555" stroke-width="0.7" fill="none"/>
<path d="M341.5 587.8L403.8 587.8" stroke="#555" stroke-width="0.7" fill="none"/>
<path d="M341.5 592.6L403.8 592.6" stroke="#555" stroke-width="0.7" fill="none"/>
<path d="M341.5 602.2L403.8 602.2" stroke="#555" stroke-width="0.7" fill="none"/>
<path d="M341.5 607L403.8 607" stroke="#555" stroke-width="0.7" fill="none"/>
<path d="M403.8 573.6H518.3M403.8 597.6H518.3M470.5 573.6V611.5M484.5 573.6V592.8M501.5 573.6V597.6" stroke="#1a1a1a" stroke-width="1" fill="none"/>
<path d="M470.5 578.4H518.3M470.5 592.8H518.3" stroke="#1a1a1a" stroke-width="1" fill="none"/>
<path d="M475.5 578.4V592.8M480.5 578.4V592.8M489.6 592.8V597.6" stroke="#1a1a1a" stroke-width="1" fill="none"/>
<text x="342.3" y="582" font-size="3.8" text-anchor="start" fill="#2b3050" stroke="#2b3050" stroke-width="0.30" textLength="5.5" lengthAdjust="spacingAndGlyphs">Изм.</text>
<text x="349.3" y="582" font-size="3.8" text-anchor="start" fill="#2b3050" stroke="#2b3050" stroke-width="0.30" textLength="7.5" lengthAdjust="spacingAndGlyphs">Лист</text>
<text x="361" y="582" font-size="3.8" text-anchor="start" fill="#2b3050" stroke="#2b3050" stroke-width="0.30" textLength="15" lengthAdjust="spacingAndGlyphs">№ докум.</text>
<text x="382.5" y="582" font-size="3.8" text-anchor="start" fill="#2b3050" stroke="#2b3050" stroke-width="0.30" textLength="9" lengthAdjust="spacingAndGlyphs">Подп.</text>
<text x="395" y="582" font-size="3.8" text-anchor="start" fill="#2b3050" stroke="#2b3050" stroke-width="0.30" textLength="8" lengthAdjust="spacingAndGlyphs">Дата</text>
<text x="342.4" y="586.8" font-size="3.8" text-anchor="start" fill="#2b3050" stroke="#2b3050" stroke-width="0.30" textLength="11.5" lengthAdjust="spacingAndGlyphs">Разраб.</text>
<text x="342.4" y="591.6" font-size="3.8" text-anchor="start" fill="#2b3050" stroke="#2b3050" stroke-width="0.30" textLength="8" lengthAdjust="spacingAndGlyphs">Пров.</text>
<text x="342.4" y="596.6" font-size="3.8" text-anchor="start" fill="#2b3050" stroke="#2b3050" stroke-width="0.30" textLength="12.5" lengthAdjust="spacingAndGlyphs">Т.контр.</text>
<text x="342.4" y="606" font-size="3.8" text-anchor="start" fill="#2b3050" stroke="#2b3050" stroke-width="0.30" textLength="13" lengthAdjust="spacingAndGlyphs">Н.контр.</text>
<text x="342.4" y="610.6" font-size="3.8" text-anchor="start" fill="#2b3050" stroke="#2b3050" stroke-width="0.30" textLength="6.5" lengthAdjust="spacingAndGlyphs">Утв.</text>
<text x="358.6" y="586.8" font-size="4" text-anchor="start" fill="#2b3050" stroke="#2b3050" stroke-width="0.30" textLength="17" lengthAdjust="spacingAndGlyphs">Зотов Д.А.</text>
<text x="358.6" y="591.6" font-size="4" text-anchor="start" fill="#2b3050" stroke="#2b3050" stroke-width="0.30" textLength="17.5" lengthAdjust="spacingAndGlyphs">Козлов Д.С.</text>
<text x="460" y="569.8" font-size="10.5" text-anchor="middle" fill="#33374c" stroke="#33374c" stroke-width="0.00" textLength="48" lengthAdjust="spacingAndGlyphs">БДС-14.22.10.14</text>
<text x="408" y="584.2" font-size="10" text-anchor="start" fill="#33374c" stroke="#33374c" stroke-width="0.00" textLength="57" lengthAdjust="spacingAndGlyphs">Колесо зубчатое</text>
<text x="411.7" y="593.5" font-size="10" text-anchor="start" fill="#33374c" stroke="#33374c" stroke-width="0.00" textLength="53" lengthAdjust="spacingAndGlyphs">цилиндрическое</text>
<text x="407.7" y="607.7" font-size="6.5" text-anchor="start" fill="#33374c" stroke="#33374c" stroke-width="0.14" textLength="59.5" lengthAdjust="spacingAndGlyphs">Сталь 40Х ГОСТ4543-71</text>
<text x="477.5" y="577.6" font-size="3.6" text-anchor="middle" fill="#2b3050" stroke="#2b3050" stroke-width="0.30" textLength="6" lengthAdjust="spacingAndGlyphs">Лит.</text>
<text x="493" y="577.6" font-size="3.6" text-anchor="middle" fill="#2b3050" stroke="#2b3050" stroke-width="0.30" textLength="10" lengthAdjust="spacingAndGlyphs">Масса</text>
<text x="510" y="577.6" font-size="3.6" text-anchor="middle" fill="#2b3050" stroke="#2b3050" stroke-width="0.30" textLength="14.5" lengthAdjust="spacingAndGlyphs">Масштаб</text>
<text x="510.5" y="588" font-size="6" text-anchor="middle" fill="#33374c" stroke="#33374c" stroke-width="0.22" textLength="5.5" lengthAdjust="spacingAndGlyphs">1:1</text>
<text x="476" y="596.8" font-size="3.6" text-anchor="start" fill="#2b3050" stroke="#2b3050" stroke-width="0.30" textLength="7" lengthAdjust="spacingAndGlyphs">Лист</text>
<text x="493" y="596.8" font-size="3.6" text-anchor="start" fill="#2b3050" stroke="#2b3050" stroke-width="0.30" textLength="11" lengthAdjust="spacingAndGlyphs">Листов</text>
<text x="512" y="596.8" font-size="3.8" text-anchor="start" fill="#2b3050" stroke="#2b3050" stroke-width="0.30">1</text>
<text x="494.5" y="602.4" font-size="4.2" text-anchor="middle" fill="#2b3050" stroke="#2b3050" stroke-width="0.30" textLength="37" lengthAdjust="spacingAndGlyphs">ПГТУ им. В.Г. Шухова</text>
<text x="494.5" y="606.4" font-size="4.2" text-anchor="middle" fill="#2b3050" stroke="#2b3050" stroke-width="0.30" textLength="22" lengthAdjust="spacingAndGlyphs">Кафедра ПСМ</text>
<text x="494.5" y="610.4" font-size="4.2" text-anchor="middle" fill="#2b3050" stroke="#2b3050" stroke-width="0.30" textLength="24" lengthAdjust="spacingAndGlyphs">Группа СПМ-41</text>
<text x="414" y="616" font-size="4.4" text-anchor="start" fill="#2b3050" stroke="#2b3050" stroke-width="0.30" textLength="17.5" lengthAdjust="spacingAndGlyphs">Копировал</text>
<text x="481.5" y="616" font-size="4.4" text-anchor="start" fill="#2b3050" stroke="#2b3050" stroke-width="0.30" textLength="13" lengthAdjust="spacingAndGlyphs">Формат</text>
<text x="499.5" y="616" font-size="4.4" text-anchor="start" fill="#2b3050" stroke="#2b3050" stroke-width="0.30" textLength="5" lengthAdjust="spacingAndGlyphs">А3</text>
</svg><!--DWE-->
</body></html>
